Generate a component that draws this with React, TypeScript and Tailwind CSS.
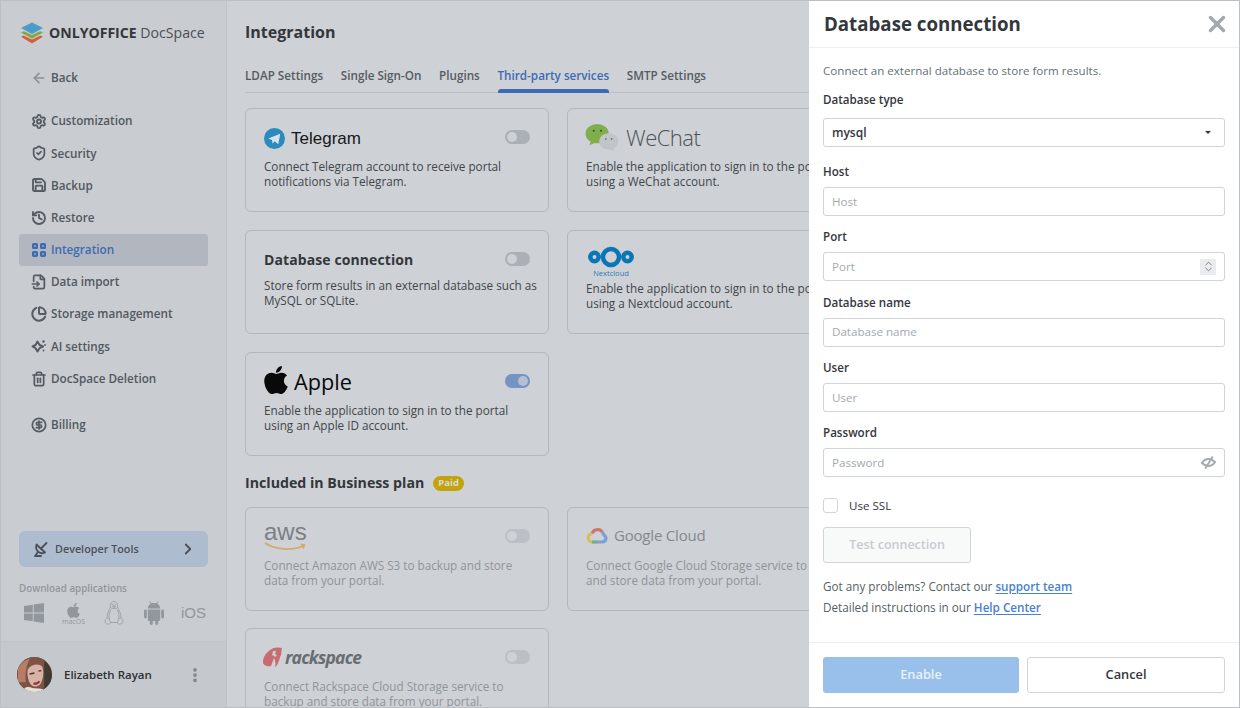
import type { ReactNode } from "react"
import {
  ArrowLeft,
  ChartPie,
  ChevronRight,
  ChevronsUpDown,
  CircleDollarSign,
  EllipsisVertical,
  FileInput,
  History,
  Save,
  Settings,
  ShieldCheck,
  Trash2,
  X,
} from "lucide-react"
import { FaApple } from "react-icons/fa"

type NavItem = { label: string; icon: ReactNode; active?: boolean; gap?: boolean }

const iconClass = "size-[16px] text-[#565c63]"

function Sparkle() {
  return (
    <svg viewBox="0 0 16 16" className="size-[16px] text-[#565c63]" fill="none">
      <path d="M6.500 3.500 8.600 7 12 8.500 8.600 10.200 6.500 13.500 4.500 10.200 1.500 8.500 4.500 7z" stroke="currentColor" strokeWidth="2" strokeLinejoin="round" />
      <circle cx="12.500" cy="3.500" r="1.200" fill="currentColor" />
      <circle cx="14" cy="7" r="0.900" fill="currentColor" />
      <circle cx="12.500" cy="12.500" r="0.900" fill="currentColor" />
    </svg>
  )
}

function GridIcon() {
  return (
    <svg viewBox="0 0 14 14" className="size-[14px] text-[#3d6bb3]" fill="none" stroke="currentColor" strokeWidth="2.200">
      <rect x="1.100" y="1.100" width="3.800" height="3.800" rx=".4" />
      <rect x="9.100" y="1.100" width="3.800" height="3.800" rx=".4" />
      <rect x="1.100" y="9.100" width="3.800" height="3.800" rx=".4" />
      <rect x="9.100" y="9.100" width="3.800" height="3.800" rx=".4" />
    </svg>
  )
}

const navItems: NavItem[] = [
  { label: "Customization", icon: <Settings className="size-[17px] text-[#565c63]" strokeWidth={2.8} /> },
  { label: "Security", icon: <ShieldCheck className={iconClass} strokeWidth={2.600} /> },
  { label: "Backup", icon: <Save className={iconClass} strokeWidth={2.800} /> },
  { label: "Restore", icon: <History className={iconClass} strokeWidth={2.800} /> },
  { label: "Integration", icon: <GridIcon />, active: true },
  { label: "Data import", icon: <FileInput className={iconClass} strokeWidth={2.600} /> },
  { label: "Storage management", icon: <ChartPie className={iconClass} strokeWidth={3} /> },
  { label: "AI settings", icon: <Sparkle /> },
  { label: "DocSpace Deletion", icon: <Trash2 className={iconClass} strokeWidth={2.600} /> },
  { label: "Billing", icon: <CircleDollarSign className={iconClass} strokeWidth={2.600} />, gap: true },
]

function Logo() {
  return (
    <svg viewBox="0 0 24 22" className="h-[22px] w-[24px]">
      <path d="M1 14.800 3.600 13.600 12 17.400 20.400 13.600 23 14.800 12 21.500z" fill="#d0623f" />
      <path d="M1 10.600 3.800 9.300 12 13 20.200 9.300 23 10.600 12 16.500z" fill="#83a63f" />
      <path d="M12 0.500 23 6 12 12 1 6z" fill="#4a9dc6" />
    </svg>
  )
}

function Avatar() {
  return (
    <svg viewBox="0 0 36 36" className="size-[35px] rounded-full">
      <defs>
        <filter id="soft" x="-20%" y="-20%" width="140%" height="140%">
          <feGaussianBlur stdDeviation="0.800" />
        </filter>
      </defs>
      <rect width="36" height="36" fill="#6f5c52" />
      <g filter="url(#soft)">
        <path d="M0 36V10C4 2 12-1 20 0c7 1 13 6 16 14v22z" fill="#7b5245" />
        <path d="M28 4c5 3 8 9 8 16v16h-8z" fill="#3d3a33" />
        <path d="M1 12c3-6 7-9 12-10-3 6-5 14-4 24H1z" fill="#b77c64" />
        <path d="M11 13c3-6 12-7 15-3 2 6 1 13-2 18-3 3-7 3-9 1-3-3-5-10-4-16z" fill="#d6b3a6" />
        <path d="M13 17.500l5-1M22 14.500l3-.5" stroke="#4d3129" strokeWidth="1.500" />
        <path d="M17 27c2 1 5 0 6-2" stroke="#9c2d3c" strokeWidth="2.200" fill="none" />
        <path d="M6 36c1-6 6-6 10-4 4 1 9-1 14 4z" fill="#e5e0da" />
      </g>
    </svg>
  )
}

function WindowsIcon() {
  return (
    <svg viewBox="0 0 20 20" className="size-[20px]" fill="currentColor">
      <path d="M0 3 8.800 1.700V9.500H0zM9.700 1.500 20 0V9.500H9.700zM0 10.500H8.800V18.300L0 17zM9.700 10.500H20V20L9.700 18.500z" />
    </svg>
  )
}

function LinuxIcon() {
  return (
    <svg viewBox="0 0 20 24" className="h-[24px] w-[20px]" fill="none" stroke="currentColor" strokeWidth="1">
      <path d="M10 .5c2.500 0 3.500 2 3.500 4.500 0 3 4 6.500 3.500 12" />
      <path d="M10 .5C7.500.5 6.500 2.500 6.500 5c0 3-4 6.500-3.500 12" />
      <path d="M6.500 6.500c1 1.500 6 1.500 7 0" />
      <path d="M7 8.500c-2 3-2.500 7-1.500 10M13 8.500c2 3 2.500 7 1.500 10" />
      <path d="M1 20c0-2 2-3.500 3-3 1.500.5 2 3 2.500 4 .5 2-1.500 2.500-3 2-1.500-.5-2.500-1-2.500-3zM19 20c0-2-2-3.500-3-3-1.500.5-2 3-2.500 4-.5 2 1.500 2.500 3 2 1.500-.5 2.500-1 2.500-3z" />
      <path d="M6.500 21.500h7" />
      <path d="M8.500 3.500h.01M11.500 3.500h.01" strokeWidth="1.500" strokeLinecap="round" />
      <path d="M8.500 5.500 10 4.700l1.500.8L10 6.500z" fill="currentColor" />
    </svg>
  )
}

function AndroidIcon() {
  return (
    <svg viewBox="0 0 20 24" className="h-[24px] w-[20px]" fill="currentColor">
      <path d="M3.800 7.500C4 4 6.500 2 10 2s6 2 6.200 5.500z" />
      <path d="M6 .5 7.500 3M14 .5 12.500 3" stroke="currentColor" strokeWidth="1" />
      <path d="M3.800 8.500h12.400v10a1.500 1.500 0 0 1-1.500 1.500H5.300a1.500 1.500 0 0 1-1.500-1.500z" />
      <rect x="0" y="8.500" width="2.800" height="9" rx="1.400" />
      <rect x="17.200" y="8.500" width="2.800" height="9" rx="1.400" />
      <rect x="5.800" y="18" width="3" height="6" rx="1.400" />
      <rect x="11.200" y="18" width="3" height="6" rx="1.400" />
    </svg>
  )
}

function DishIcon() {
  return (
    <svg viewBox="0 0 16 16" className="size-[16px]" fill="none" stroke="currentColor" strokeWidth="1.800" strokeLinecap="round" strokeLinejoin="round">
      <path d="M3.500 3.500c-1 3.500 0 6 2 7.500s4.500 1.500 6.500.5z" />
      <path d="M8 7.500 13.500 2" />
      <path d="M5 11 2 15h6" />
    </svg>
  )
}

function Sidebar() {
  return (
    <aside className="flex h-full w-[226px] shrink-0 flex-col border-r border-[#bfc2c6] bg-[#c9ccd0]">
      <div className="ml-[19px] mt-[21px] flex h-[22px] items-center gap-[5px] whitespace-nowrap text-[14.100px] text-[#33373b]">
        <Logo />
        <span className="font-bold">
          ONLYOFFICE <span className="font-normal text-[#4a4f55]">DocSpace</span>
        </span>
      </div>
      <div className="mx-[18px] mt-[18px] flex h-8 items-center gap-[4px] px-[12px] text-[11.700px] font-semibold text-[#52585f]">
        <ArrowLeft className="size-[16px] text-[#8b9198]" strokeWidth={2.400} />
        <span>Back</span>
      </div>
      <nav className="mx-[18px] mt-[11px] flex flex-col">
        {navItems.map((item) => (
          <div
            key={item.label}
            className={
              item.active
                ? "flex h-[32.200px] items-center gap-[4px] rounded-[3px] bg-[#b2b7bf] px-[12px] text-[11.700px] font-semibold text-[#3d6bb3]"
                : item.gap
                  ? "mt-[14px] flex h-8 items-center gap-[4px] px-[12px] text-[11.700px] font-semibold text-[#52585f]"
                  : "flex h-[32.200px] items-center gap-[4px] px-[12px] text-[11.700px] font-semibold text-[#52585f]"
            }
          >
            <span className="flex w-[16px] justify-center">{item.icon}</span>
            <span>{item.label}</span>
          </div>
        ))}
      </nav>
      <div className="flex-1" />
      <div className="mx-[18px] flex h-[36px] items-center rounded-[6px] bg-[#aebccf] pl-[14px] pr-[11px] text-[10.800px] font-semibold text-[#4a5058]">
        <DishIcon />
        <span className="ml-[6px] flex-1">Developer Tools</span>
        <ChevronRight className="size-[18px]" strokeWidth={2.400} />
      </div>
      <p className="mx-[18px] mt-[15px] text-[9.800px] font-semibold leading-[14px] text-[#92979e]">Download applications</p>
      <div className="ml-[23px] mt-[4px] flex h-[26px] items-center text-[#92979d]">
        <WindowsIcon />
        <span className="ml-[17px] flex w-[25px] flex-col items-center">
          <FaApple className="size-[17px]" />
          <span className="-mt-[1px] text-[7px] leading-[7px]">macOS</span>
        </span>
        <span className="ml-[18px] text-[#a2a6ac]">
          <LinuxIcon />
        </span>
        <span className="ml-[20px]">
          <AndroidIcon />
        </span>
        <span className="ml-[17px] text-[15px] [font-family:'Liberation_Sans',sans-serif]">iOS</span>
      </div>
      <div className="mt-[15px] flex h-[66px] items-center border-t border-[#c0c3c7] bg-[#c5c8cc] pl-[16px] pr-[22px]">
        <Avatar />
        <span className="ml-[12px] flex-1 text-[11.500px] font-semibold text-[#2d3034]">Elizabeth Rayan</span>
        <EllipsisVertical className="size-[18px] text-[#7f858c]" strokeWidth={3} />
      </div>
    </aside>
  )
}

function Toggle({ on = false, faded = false }: { on?: boolean; faded?: boolean }) {
  if (on) {
    return (
      <span className="mt-[-2px] flex h-[14px] w-[25px] items-center justify-end rounded-full bg-[#7394c5] pr-[2px]">
        <span className="size-[10px] rounded-full bg-[#b5c1d3]" />
      </span>
    )
  }
  return (
    <span className={faded
      ? "mt-[-2px] flex h-[14px] w-[25px] items-center rounded-full bg-[#bcc0c6] pl-[2px]"
      : "mt-[-2px] flex h-[14px] w-[25px] items-center rounded-full bg-[#abb0b7] pl-[2px]"}>
      <span className={faded ? "size-[10px] rounded-full bg-[#ced1d5]" : "size-[10px] rounded-full bg-[#cdd0d4]"} />
    </span>
  )
}

function Card({ logo, text, on, faded, tight }: { logo: ReactNode; text: string; on?: boolean; faded?: boolean; tight?: boolean }) {
  return (
    <div className="h-[104px] rounded-[6px] border border-[#b3b7bc] px-[18px] pt-[9px]">
      <div className="flex h-[40px] items-center justify-between">
        {logo}
        <Toggle on={on} faded={faded} />
      </div>
      <p
        className={
          (faded ? "text-[#8f959b] " : "text-[#41464b] ") +
          (tight ? "-mt-[2px] " : "mt-[1px] ") +
          "w-[273px] text-[11.700px] leading-[15px]"
        }
      >
        {text}
      </p>
    </div>
  )
}

const telegramLogo = (
  <span className="mt-[1px] flex items-center gap-[6px] text-[17px] text-[#16181b] [font-family:'Liberation_Sans',sans-serif]">
    <svg viewBox="0 0 22 22" className="size-[21px]">
      <circle cx="11" cy="11" r="11" fill="#2b8bbd" />
      <path d="M4.500 11 17 6l-2 11-4-3-2 2.500-.6-4z" fill="#d7e3ea" />
    </svg>
    Telegram
  </span>
)

const wechatLogo = (
  <span className="-ml-[1px] -mt-[1px] flex items-center gap-[7px] text-[22px] font-light tracking-[-0.5px] text-[#4d5258]">
    <svg viewBox="0 0 34 28" className="h-[27px] w-[34px]">
      <ellipse cx="12" cy="10" rx="12" ry="10" fill="#7fae4c" />
      <path d="M6 16 4 22l7-3z" fill="#7fae4c" />
      <ellipse cx="24" cy="18" rx="10" ry="8.500" fill="#c1c4c8" />
      <path d="M28 24l2 4-6-2z" fill="#c1c4c8" />
      <circle cx="8.500" cy="7" r="1" fill="#33521c" />
      <circle cx="16" cy="7" r="1" fill="#33521c" />
      <circle cx="21" cy="15.500" r=".9" fill="#6d7176" />
      <circle cx="27" cy="15.500" r=".9" fill="#6d7176" />
    </svg>
    WeChat
  </span>
)

const nextcloudLogo = (
  <span className="ml-[2px] mt-[3px] flex w-[46px] flex-col items-center">
    <svg viewBox="0 0 46 22" className="h-[22px] w-[46px]">
      <g fill="none" stroke="#0a76b5" strokeWidth="4.500">
        <circle cx="23" cy="11" r="8" />
        <circle cx="6.500" cy="11" r="4.200" />
        <circle cx="39.500" cy="11" r="4.200" />
      </g>
    </svg>
    <span className="mt-[1px] text-[7.500px] leading-[9px] text-[#2b79b5]">Nextcloud</span>
  </span>
)

const appleLogo = (
  <span className="-ml-[4px] flex items-center gap-[2px] text-[21.700px] text-[#08090b]">
    <FaApple className="-mt-[3px] size-[32px]" />
    Apple
  </span>
)

const awsLogo = (
  <span className="flex flex-col [font-family:'Liberation_Sans',sans-serif]">
    <span className="text-[24px] leading-[20px] text-[#7a8087]">aws</span>
    <svg viewBox="0 0 44 10" className="h-[10px] w-[43px]">
      <path d="M1 1c10 7 28 8 39 3" stroke="#d6a868" strokeWidth="1.800" fill="none" />
      <path d="m37 1.500 5.500 1-2 5z" fill="#d6a868" />
    </svg>
  </span>
)

const googleLogo = (
  <span className="-mt-[4px] flex items-center gap-[6px] text-[15px] tracking-[-0.2px] text-[#85898e]">
    <svg viewBox="0 0 22 18" className="h-[19px] w-[22px]" fill="none" strokeWidth="3.200">
      <path d="M6 7a6 6 0 0 1 10-2" stroke="#cf7468" />
      <path d="M16 5a6 6 0 0 1 1.500 4" stroke="#7d9fd6" />
      <path d="M17 8.500c4 .5 4 7-1 7H11" stroke="#7d9fd6" />
      <path d="M11 15.500H6" stroke="#78ad83" />
      <path d="M6 7c-5 1-5 8.500 0 8.500" stroke="#d8bc63" />
    </svg>
    Google Cloud
  </span>
)

const rackspaceLogo = (
  <span className="-ml-[1px] -mt-[1px] flex items-center gap-[2px] text-[17.500px] font-bold italic tracking-[-0.8px] text-[#686d73]">
    <svg viewBox="0 0 20 22" className="h-[22px] w-[20px]">
      <path d="M7 3c3-3 9-3 12-2-1 3 0 6-2 9-1 5-3 9-5 10 1-4 0-7-1-9l-3 8C4 20 0 18 0 15 0 10 3 6 7 3z" fill="#c76c72" />
      <path d="M10 4h3l-1 3 2 1-2 2-2-2-1 1z" fill="#ced1d5" />
    </svg>
    rackspace
  </span>
)

function Main() {
  const tabs = ["LDAP Settings", "Single Sign-On", "Plugins", "Third-party services", "SMTP Settings"]
  return (
    <main className="h-full min-w-0 flex-1 overflow-hidden bg-[#ced1d5] pl-[18px]">
      <h1 className="mt-[20px] text-[16px] font-bold leading-[22px] text-[#33373b]">Integration</h1>
      <div className="mt-[21px] flex h-[29px] w-[564px] gap-[17.700px] border-b border-[#bcbfc3]">
        {tabs.map((tab) => (
          <div
            key={tab}
            className={
              tab === "Third-party services"
                ? "relative whitespace-nowrap pt-[2px] text-[11.700px] font-semibold leading-[18px] text-[#3d6bb3]"
                : "whitespace-nowrap pt-[2px] text-[11.700px] font-semibold leading-[18px] text-[#565b61]"
            }
          >
            {tab}
            {tab === "Third-party services" ? (
              <span className="absolute inset-x-0 -bottom-px h-[4px] rounded-t-[3px] bg-[#3d6bb3]" />
            ) : null}
          </div>
        ))}
      </div>
      <div className="mt-[15px] grid w-[626px] grid-cols-[304px_304px] gap-[18px]">
        <Card logo={telegramLogo} text="Connect Telegram account to receive portal notifications via Telegram." />
        <Card logo={wechatLogo} text="Enable the application to sign in to the portal using a WeChat account." />
        <Card
          logo={<span className="-mt-[2px] text-[14px] font-bold tracking-[0.1px] text-[#33373b]">Database connection</span>}
          text="Store form results in an external database such as MySQL or SQLite."
          tight
        />
        <Card logo={nextcloudLogo} text="Enable the application to sign in to the portal using a Nextcloud account." />
        <Card logo={appleLogo} text="Enable the application to sign in to the portal using an Apple ID account." on />
      </div>
      <div className="mt-[17px] flex h-[20px] items-center gap-[9px]">
        <h2 className="text-[14.200px] font-bold text-[#33373b]">Included in Business plan</h2>
        <span className="flex h-[15px] items-center rounded-full bg-[#c4a20c] px-[5px] text-[9.500px] font-bold text-[#d8dadb]">Paid</span>
      </div>
      <div className="mt-[14px] grid w-[626px] grid-cols-[304px_304px] gap-x-[18px] gap-y-[17px]">
        <Card logo={awsLogo} text="Connect Amazon AWS S3 to backup and store data from your portal." faded />
        <Card logo={googleLogo} text="Connect Google Cloud Storage service to backup and store data from your portal." faded />
        <Card logo={rackspaceLogo} text="Connect Rackspace Cloud Storage service to backup and store data from your portal." faded />
      </div>
    </main>
  )
}

function Field({ label, children }: { label: string; children: ReactNode }) {
  return (
    <div>
      <p className="text-[11.600px] font-semibold leading-[18px] text-[#33373b]">{label}</p>
      <div className="mt-[6px]">{children}</div>
    </div>
  )
}

function Input({ placeholder, suffix }: { placeholder: string; suffix?: ReactNode }) {
  return (
    <div className="flex h-[29px] items-center justify-between rounded-[3px] border border-[#d0d5da] pl-[8px] pr-[8px] text-[11.600px] text-[#a3a9ae]">
      <span>{placeholder}</span>
      {suffix}
    </div>
  )
}

function EyeSlash() {
  return (
    <svg viewBox="0 0 16 16" className="size-[15px] text-[#a3a9ae]" fill="none" stroke="currentColor" strokeWidth="2">
      <path d="M1 8.500c3-5 9-6 14-1-3 5-9 6-14 1z" />
      <path d="M4.500 14.500 12.500 1.500" />
    </svg>
  )
}

function Panel() {
  return (
    <section className="flex h-full w-[430px] shrink-0 flex-col bg-white">
      <header className="flex h-[47px] shrink-0 items-center justify-between border-b border-[#eceef1] pl-[15px] pr-[14px]">
        <h2 className="mt-[1px] text-[18.700px] font-bold text-[#33373b]">Database connection</h2>
        <X className="-mr-[5px] size-[26px] text-[#a3a9ae]" strokeWidth={3.200} />
      </header>
      <div className="flex flex-1 flex-col px-[14px] pt-[15px]">
        <p className="text-[11.600px] leading-[16px] text-[#657077]">Connect an external database to store form results.</p>
        <div className="mt-[12px]">
          <p className="text-[11.600px] font-semibold leading-[18px] text-[#33373b]">Database type</p>
          <div className="mt-[9px] flex h-[29px] items-center justify-between rounded-[3px] border border-[#d0d5da] pl-[8px] pr-[13px] text-[12px] font-semibold text-[#33373b]">
            <span>mysql</span>
            <span className="h-0 w-0 border-x-[3px] border-t-[3px] border-x-transparent border-t-[#33373b]" />
          </div>
        </div>
        <div className="mt-[16px] flex flex-col gap-[12.250px]">
          <Field label="Host">
            <Input placeholder="Host" />
          </Field>
          <Field label="Port">
            <Input
              placeholder="Port"
              suffix={
                <span className="flex h-[16px] w-[16px] items-center justify-center bg-[#e9ebee]">
                  <ChevronsUpDown className="size-[13px] text-[#666b70]" strokeWidth={1.500} />
                </span>
              }
            />
          </Field>
          <Field label="Database name">
            <Input placeholder="Database name" />
          </Field>
          <Field label="User">
            <Input placeholder="User" />
          </Field>
          <Field label="Password">
            <Input placeholder="Password" suffix={<EyeSlash />} />
          </Field>
        </div>
        <div className="mt-[21px] flex h-[15px] items-center gap-[11px]">
          <span className="size-[15px] rounded-[3px] border border-[#d0d5da]" />
          <span className="text-[11.600px] leading-[15px] text-[#33373b]">Use SSL</span>
        </div>
        <button className="mt-[14px] h-[36px] w-[148px] rounded-[3px] border border-[#d0d5da] bg-[#f8f9f9] pt-[1px] text-[12.500px] font-semibold text-[#c7cbcf]">
          Test connection
        </button>
        <p className="mt-[13px] text-[11.700px] leading-[20px] text-[#555f65]">
          Got any problems? Contact our <a className="font-semibold text-[#4781d1] underline underline-offset-2">support team</a>
        </p>
        <p className="mt-[1px] text-[11.700px] leading-[20px] text-[#555f65]">
          Detailed instructions in our <a className="font-semibold text-[#4781d1] underline underline-offset-2">Help Center</a>
        </p>
      </div>
      <footer className="flex h-[65px] shrink-0 items-start gap-[8px] border-t border-[#eceef1] px-[14px] pt-[14px]">
        <button className="h-[36px] flex-1 rounded-[3px] bg-[#98c0eb] text-[12.800px] font-semibold text-[#eaf2fb]">Enable</button>
        <button className="h-[36px] flex-1 rounded-[3px] border border-[#d0d5da] bg-white text-[12.800px] font-semibold text-[#33373b]">Cancel</button>
      </footer>
    </section>
  )
}

export default function App() {
  return (
    <div className="flex h-[708px] w-[1240px] overflow-hidden border border-[#bcbfc3] [font-family:'Open_Sans',sans-serif]">
      <Sidebar />
      <Main />
      <Panel />
    </div>
  )
}
